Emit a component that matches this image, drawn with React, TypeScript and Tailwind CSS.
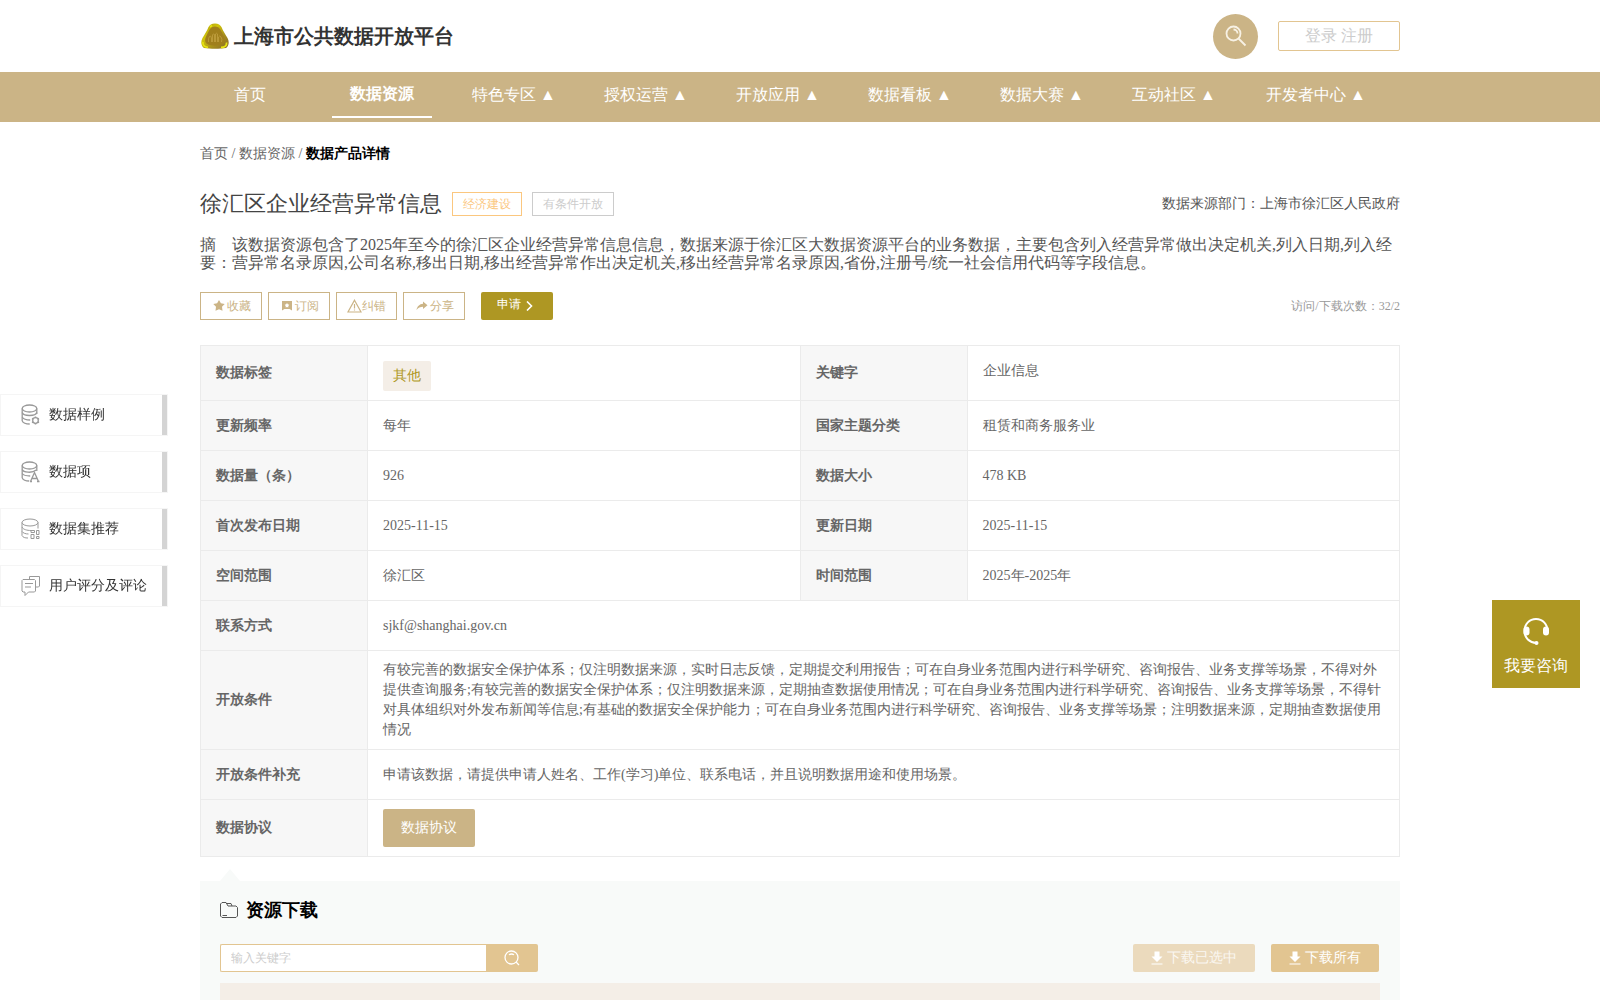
import type { ReactNode } from 'react';

const NAV = [
  { label: '首页' },
  { label: '数据资源', active: true },
  { label: '特色专区', menu: true },
  { label: '授权运营', menu: true },
  { label: '开放应用', menu: true },
  { label: '数据看板', menu: true },
  { label: '数据大赛', menu: true },
  { label: '互动社区', menu: true },
  { label: '开发者中心', menu: true },
];

const PAIRS = [
  ['更新频率', '每年', '国家主题分类', '租赁和商务服务业'],
  ['数据量（条）', '926', '数据大小', '478 KB'],
  ['首次发布日期', '2025-11-15', '更新日期', '2025-11-15'],
  ['空间范围', '徐汇区', '时间范围', '2025年-2025年'],
];

const CONDITIONS =
  '有较完善的数据安全保护体系；仅注明数据来源，实时日志反馈，定期提交利用报告；可在自身业务范围内进行科学研究、咨询报告、业务支撑等场景，不得对外提供查询服务;有较完善的数据安全保护体系；仅注明数据来源，定期抽查数据使用情况；可在自身业务范围内进行科学研究、咨询报告、业务支撑等场景，不得针对具体组织对外发布新闻等信息;有基础的数据安全保护能力；可在自身业务范围内进行科学研究、咨询报告、业务支撑等场景；注明数据来源，定期抽查数据使用情况';

function Logo() {
  return (
    <svg width="28" height="26" viewBox="0 0 28 26" aria-hidden="true">
      <defs>
        <linearGradient id="gold" x1="0" y1="0" x2="1" y2="1">
          <stop offset="0" stopColor="#a59412" />
          <stop offset="0.35" stopColor="#d0c40a" />
          <stop offset="0.65" stopColor="#a8901c" />
          <stop offset="1" stopColor="#85652c" />
        </linearGradient>
      </defs>
      <path d="M14 0.5c3.400 0 5.400 1.300 6.600 3.800 1.400 3.600 3.600 7 5.900 10.700 2 3.800 1.500 8-1.500 10-6 1-16 1-22 0-3-2-3.500-6.200-1.500-10C3.800 11.300 6 7.900 7.400 4.300 8.600 1.800 10.600 0.500 14 0.500z" fill="url(#gold)" />
      <path d="M14 3.500c4 0 5.500 3 7 6 2 4 4.500 8 1.500 11-4 3-13 3-17 0-3-3-.5-7 1.500-11 1.500-3 3-6 7-6z" fill="#a07f1c" />
      <path d="M7.500 19q-.5-4 1-5.500t2 1.500v4M11.500 19v-7q1-2 2-.5V19M14.500 19v-8q1-1.500 2 0v8M17.500 19v-5q1-2 2.500 0t.5 5" stroke="#c0a040" strokeWidth="0.800" fill="none" />
      <path d="M2 19c-.5 3 1 5 5 5.300M20 24.500c4 0 6-2 5.500-5M9 4l2-1.500" stroke="#e6e312" strokeWidth="1.800" fill="none" />
    </svg>
  );
}

function Database({ children, thin }: { children: ReactNode; thin?: boolean }) {
  return (
    <svg width="20" height="22" viewBox="0 0 20 22" fill="none" stroke="#999" strokeWidth={thin ? 1 : 1.3} aria-hidden="true">
      <ellipse cx={thin ? 9 : 8.500} cy="4.500" rx={thin ? 8 : 7.300} ry="3.500" />
      <path d={thin ? 'M1 4.500v13M17 4.500v6' : 'M1.200 4.500v12.500M15.800 4.500v5.500'} />
      {children}
    </svg>
  );
}

const SIDE = [
  {
    label: '数据样例',
    icon: (
      <Database>
        <path d="M1.200 8.500c1 4 13.600 4 14.600 0M1.200 13c1 1.800 4 3 8 3M1.200 17c1 2 4 3 7.500 3" />
        <circle cx="14.500" cy="16.500" r="2.800" />
        <path d="M14.500 12.500v1.500M14.500 19v1.500M11 14.500l1 .6M17 18l1 .6M11 18.600l1-.6M17 15.100l1-.6" strokeWidth="1.500" />
      </Database>
    ),
  },
  {
    label: '数据项',
    icon: (
      <Database>
        <path d="M1.200 8.500c1 3 10 4 14 .5M1.200 12.500c1 1.500 4 2.500 8 2.500M1.200 17c1 2 3.500 3 7 3" />
        <path d="M9.500 20.500l4-9 4 9M11 17.500h5.500M9 20.500h2M16 20.500h2.500" />
      </Database>
    ),
  },
  {
    label: '数据集推荐',
    icon: (
      <Database thin>
        <path d="M1 9c1 2.500 5 3.500 9 3.500M1 13.500c1 1.500 3.500 2.500 6.500 2.500M1 17.500c1 2 3 2.500 6 2.500" />
        <path d="M10 12.500h3.500v2H10zM15.500 12.500H18v4h-2.500zM10 16.500h3v4h-3zM15.500 18.500H18v2h-2.500z" />
      </Database>
    ),
  },
  {
    label: '用户评分及评论',
    icon: (
      <svg width="20" height="22" viewBox="0 0 20 22" fill="none" stroke="#999" strokeWidth="1" aria-hidden="true">
        <path d="M2 4.500h11.500l1 1v10.500l-1 1H7.500L4 20.500V17H2l-1-1V5.500zM8.500 4.500v-3h10v9.500l-1 1h-3M4 8.500h8M4 12h6" />
      </svg>
    ),
  },
];

function ActionButton({ icon, label }: { icon: ReactNode; label: string }) {
  return (
    <button className="flex h-7 items-center border border-[#cbb486] px-2.5 text-xs text-[#cbb486]">
      {icon}
      {label}
    </button>
  );
}

function DownloadIcon() {
  return (
    <svg width="12" height="14" viewBox="0 0 12 14" fill="currentColor" aria-hidden="true">
      <path d="M3.500 0.500h5v5h3L6 11 0.500 5.500h3zM0.500 12.500h11v1h-11z" />
    </svg>
  );
}

const th = 'border border-[#ebebeb] bg-[#f7f7f7] px-[15px] text-left font-bold';
const td = 'border border-[#ebebeb] px-[15px]';

export default function App() {
  return (
    <div className="h-screen overflow-hidden bg-white font-['Liberation_Serif',serif] text-sm text-[#666]">
      <header className="mx-auto flex h-18 max-w-[1200px] items-center justify-between">
        <a href="#" className="flex items-center gap-[5px] pl-px text-xl font-bold text-[#333]">
          <Logo />
          <h1>上海市公共数据开放平台</h1>
        </a>
        <div className="flex items-center gap-5">
          <button aria-label="搜索" className="flex size-[45px] items-center justify-center rounded-full bg-[#cbb486] text-white">
            <svg width="22" height="22" viewBox="0 0 22 22" fill="none" stroke="#f7f1e4" strokeWidth="1.800" aria-hidden="true">
              <circle cx="8.500" cy="8.500" r="7" />
              <path d="M8.500 4.500a4 4 0 0 1 4 4M13.500 13.500l7 7" />
            </svg>
          </button>
          <div className="flex h-[30px] w-[122px] items-center justify-center gap-1 rounded-xs border border-[#e2c591] text-base text-[#ccc]">
            <a href="#">登录</a>
            <a href="#">注册</a>
          </div>
        </div>
      </header>

      <nav className="h-[50px] bg-[#cbb486]">
        <div className="mx-auto flex max-w-[1200px] gap-8 text-base text-white">
          {NAV.map((n) => (
            <a
              key={n.label}
              href="#"
              className={
                n.active
                  ? 'flex h-[46px] min-w-[100px] items-center justify-center border-b-2 border-white px-2 font-bold whitespace-nowrap'
                  : 'flex h-[46px] min-w-[100px] items-center justify-center px-2 whitespace-nowrap last:px-2.5'
              }
            >
              {n.menu ? `${n.label} ▲` : n.label}
            </a>
          ))}
        </div>
      </nav>

      <main className="mx-auto max-w-[1200px]">
        <div className="pt-[22px] pb-5" aria-label="breadcrumb">
          <a href="#">首页</a> / <a href="#">数据资源</a> / <span className="font-bold text-black">数据产品详情</span>
        </div>

        <div className="flex h-10 items-center">
          <h2 className="text-[22px] text-[#444]">徐汇区企业经营异常信息</h2>
          <span className="ml-2.5 flex h-6 items-center border border-[#fbc77f] px-2.5 text-xs text-[#fbc77f]">经济建设</span>
          <span className="ml-2.5 flex h-6 items-center border border-[#ccc] px-2.5 text-xs text-[#ccc]">有条件开放</span>
          <span className="ml-auto text-[#555]">数据来源部门：上海市徐汇区人民政府</span>
        </div>

        <div className="mt-3 flex text-base leading-[18px] text-[#555]">
          <span className="w-8 shrink-0">摘　要：</span>
          <p>
            该数据资源包含了2025年至今的徐汇区企业经营异常信息信息，数据来源于徐汇区大数据资源平台的业务数据，主要包含列入经营异常做出决定机关,列入日期,列入经营异常名录原因,公司名称,移出日期,移出经营异常作出决定机关,移出经营异常名录原因,省份,注册号/统一社会信用代码等字段信息。
          </p>
        </div>

        <div className="mt-5 flex items-center gap-1.5">
          <ActionButton
            label="收藏"
            icon={
              <svg width="16" height="14" viewBox="0 0 16 14" fill="currentColor" aria-hidden="true">
                <path d="M8 1l1.900 3.300 3.800.7-2.700 2.800.5 3.900L8 10.200l-3.500 1.500.5-3.900L2.300 5l3.800-.7z" />
              </svg>
            }
          />
          <ActionButton
            label="订阅"
            icon={
              <svg width="16" height="14" viewBox="0 0 16 14" fill="currentColor" aria-hidden="true">
                <path fillRule="evenodd" d="M3 2h10v9.500L10.500 10h-5L3 11.500zM8 4l-.8 1.300-1.500.5 1 1.200v1.500L8 8l1.300.5V7l1-1.200-1.500-.5z" />
              </svg>
            }
          />
          <ActionButton
            label="纠错"
            icon={
              <svg width="15" height="14" viewBox="0 0 15 14" fill="none" stroke="currentColor" strokeWidth="1.200" aria-hidden="true">
                <path d="M7.500 1.200L14 13H1zM7.500 5v4.500M7.500 10.500v1" />
              </svg>
            }
          />
          <ActionButton
            label="分享"
            icon={
              <svg width="16" height="14" viewBox="0 0 16 14" fill="currentColor" aria-hidden="true">
                <path d="M9 2.500l4.500 3.700L9 10V7.800C6.500 7.800 4 8.500 2.500 11 3 7.500 5.500 5 9 4.700z" />
              </svg>
            }
          />
          <button className="ml-2.5 flex h-7 w-[72px] items-center gap-[5px] rounded-xs bg-[#ae9723] pb-1 pl-4 text-xs text-white">
            申请
            <svg width="7" height="10" viewBox="0 0 7 10" fill="none" stroke="currentColor" strokeWidth="1.600" className="mt-1" aria-hidden="true">
              <path d="M1 0.500L5.500 5 1 9.500" />
            </svg>
          </button>
          <span className="ml-auto text-xs text-[#999]">访问/下载次数：32/2</span>
        </div>

        <table className="mt-[25px] w-full table-fixed border-collapse">
          <colgroup>
            <col className="w-[167px]" />
            <col />
            <col className="w-[167px]" />
            <col />
          </colgroup>
          <tbody>
            <tr className="h-[55px]">
              <th className={th}>数据标签</th>
              <td className={td}>
                <span className="mt-[5px] inline-flex h-[30px] items-center rounded-xs bg-[#f4eee7] px-2.5 align-middle text-[#ae9723]">其他</span>
              </td>
              <th className={th}>关键字</th>
              <td className={`${td} pb-1`}>企业信息</td>
            </tr>
            {PAIRS.map((r) => (
              <tr key={r[0]} className="h-[50px]">
                <th className={th}>{r[0]}</th>
                <td className={td}>{r[1]}</td>
                <th className={th}>{r[2]}</th>
                <td className={td}>{r[3]}</td>
              </tr>
            ))}
            <tr className="h-[50px]">
              <th className={th}>联系方式</th>
              <td className={td} colSpan={3}>sjkf@shanghai.gov.cn</td>
            </tr>
            <tr className="h-[99px]">
              <th className={th}>开放条件</th>
              <td className={td} colSpan={3}>{CONDITIONS}</td>
            </tr>
            <tr className="h-[50px]">
              <th className={th}>开放条件补充</th>
              <td className={td} colSpan={3}>
                申请该数据，请提供申请人姓名、工作(学习)单位、联系电话，并且说明数据用途和使用场景。
              </td>
            </tr>
            <tr className="h-[57px]">
              <th className={th}>数据协议</th>
              <td className={td} colSpan={3}>
                <button className="block h-[38px] rounded-xs bg-[#cbb486] px-[18px] text-white">数据协议</button>
              </td>
            </tr>
          </tbody>
        </table>

        <section className="relative mt-6 bg-[#f8faf9] px-5 pt-[15px]">
          <svg className="absolute -top-3 left-5" width="20" height="12" viewBox="0 0 20 12" fill="#f8faf9" aria-hidden="true">
            <path d="M10 0l10 12H0z" />
          </svg>
          <h3 className="flex h-7 items-center gap-2 text-lg font-bold text-black">
            <svg width="18" height="16" viewBox="0 0 18 16" fill="none" stroke="#555" aria-hidden="true">
              <path d="M2 0.500h4l2 3.500h8l1.500 1.500v8.500l-1.500 1.500H2L0.500 14V2zM6 1.500h5l1 2.500M2.500 13.500h4.500" />
            </svg>
            资源下载
          </h3>
          <div className="mt-5 flex h-7 items-center">
            <input
              type="text"
              aria-label="输入关键字"
              placeholder="输入关键字"
              className="h-7 w-[266px] rounded-l-xs border border-r-0 border-[#e2c591] bg-white px-2.5 text-xs outline-none placeholder:text-[#ccc]"
            />
            <button aria-label="搜索" className="flex h-7 w-[52px] items-center justify-center rounded-r-xs bg-[#e2c591] text-white">
              <svg width="16" height="16" viewBox="0 0 16 16" fill="none" stroke="currentColor" strokeWidth="1.300" aria-hidden="true">
                <circle cx="7.500" cy="7.500" r="6.500" />
                <path d="M5 4.800q2.500-1.600 5 0M12 12l3 3" />
              </svg>
            </button>
            <button disabled className="ml-auto flex h-7 w-[122px] items-center justify-center gap-1 rounded-xs bg-[#ebdabd] text-white">
              <DownloadIcon />
              <span className="opacity-80">下载已选中</span>
            </button>
            <button className="mr-px ml-4 flex h-7 w-[108px] items-center justify-center gap-1 rounded-xs bg-[#e2c591] text-white">
              <DownloadIcon />
              下载所有
            </button>
          </div>
          <div className="mt-[11px] h-12 bg-[#f4eee7]" />
        </section>
      </main>

      <aside className="fixed top-[394px] left-0 flex flex-col gap-[15px]">
        {SIDE.map((s) => (
          <a
            key={s.label}
            href="#"
            className="flex h-[42px] w-[168px] items-center gap-2 border border-[#f5f5f5] bg-white pl-5 text-[#333]"
          >
            {s.icon}
            <span className="whitespace-nowrap">{s.label}</span>
            <span className="ml-auto h-full w-[5px] bg-[#d4d4d4]" />
          </a>
        ))}
      </aside>

      <button className="fixed top-[600px] right-5 flex size-[88px] flex-col items-center gap-[7px] bg-[#ae9723] pt-[17px] text-base text-white">
        <svg width="28" height="30" viewBox="0 0 28 30" fill="none" stroke="currentColor" strokeWidth="2" aria-hidden="true">
          <path d="M2.500 14C2.500 7 7.500 2 14 2s11.500 5 11.500 12M2.500 14c0 7 5 11.500 12 12" />
          <rect x="1.500" y="9.500" width="6" height="9" rx="3" fill="currentColor" stroke="none" />
          <rect x="21" y="9.500" width="6" height="9" rx="3" fill="currentColor" stroke="none" />
          <circle cx="14.500" cy="26" r="2" fill="currentColor" stroke="none" />
        </svg>
        我要咨询
      </button>
    </div>
  );
}
